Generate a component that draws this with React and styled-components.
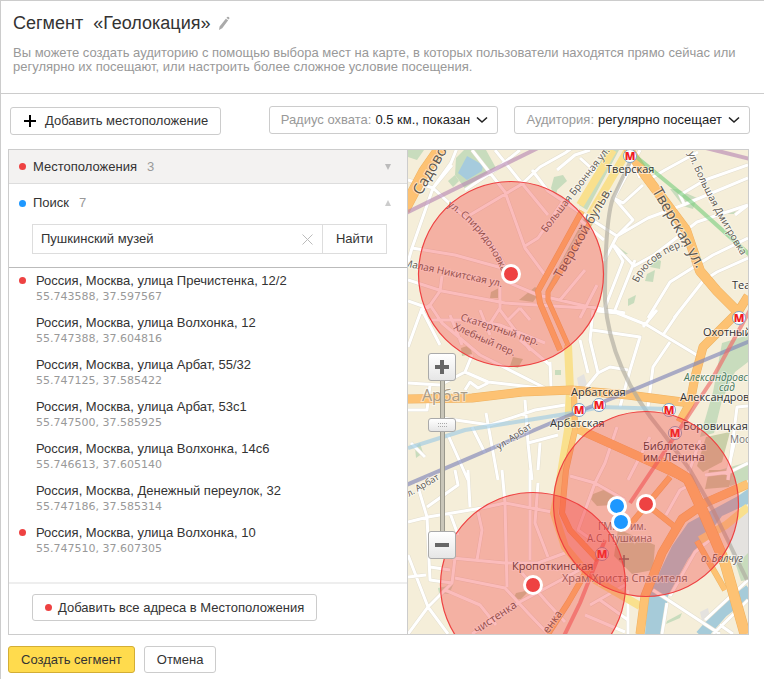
import { useState } from "react";
import styled, { createGlobalStyle } from "styled-components";

const GlobalStyle = createGlobalStyle`
  * {
    box-sizing: border-box;
  }
  body {
    margin: 0;
    background: #fff;
    color: #333;
    font-family: "Liberation Sans", Arial, sans-serif;
    font-size: 13px;
    line-height: 16px;
  }
  button, input, select {
    font: inherit;
    color: inherit;
  }
`;

const Page = styled.main`
  min-height: 100vh;
  border-top: 1px solid #ccc;
  border-left: 1px solid #ccc;
`;

const Header = styled.header`
  padding: 12px 24px 19px 12px;
  border-bottom: 1px solid #ccc;
`;

const TitleRow = styled.div`
  display: flex;
  align-items: center;
  gap: 8px;
`;

const Title = styled.h1`
  margin: 0;
  font-size: 18px;
  font-weight: 400;
  line-height: 20px;
  white-space: pre;
`;

const EditButton = styled.button`
  display: flex;
  padding: 0;
  border: 0;
  background: none;
  color: #aaa;
`;

const Lead = styled.p`
  margin: 13px 0 0;
  color: #999;
  line-height: 14px;
`;

const Toolbar = styled.div`
  display: flex;
  align-items: flex-start;
  padding: 12px 14px 14px 9px;
  gap: 16px;
`;

const Button = styled.button`
  display: inline-flex;
  align-items: center;
  justify-content: center;
  gap: 6px;
  height: ${(p) => (p.$tall ? 28 : 27)}px;
  padding: 0 12px;
  border: 1px solid ${(p) => (p.$primary ? "#d3ae35" : "#ccc")};
  border-radius: 3px;
  background: ${(p) => (p.$primary ? "#ffdb4d" : "#fff")};
  white-space: nowrap;
`;

const AddButton = styled(Button)`
  gap: 8px;
  margin-top: 1px;
  margin-right: auto;
`;

const Picker = styled.label`
  display: flex;
  align-items: center;
  gap: 4px;
  height: 28px;
  padding: 0 9px 0 11px;
  border: 1px solid #ccc;
  border-radius: 3px;
  color: #999;
  white-space: nowrap;
`;

const Select = styled.select`
  appearance: none;
  margin-right: 2px;
  padding: 0;
  border: 0;
  background: none;
  color: #222;
`;

const Card = styled.section`
  display: flex;
  margin: 0 15px 0 7px;
  border: 1px solid #ccc;
`;

const Panel = styled.div`
  flex: 0 0 399px;
  display: flex;
  flex-direction: column;
  border-right: 1px solid #ccc;
`;

const GroupButton = styled.button`
  display: flex;
  align-items: center;
  width: 100%;
  height: ${(p) => (p.$shaded ? 34 : 38)}px;
  padding: 0 16px 0 10px;
  border: 0;
  border-bottom: ${(p) => (p.$shaded ? "1px solid #ddd" : "0")};
  background: ${(p) => (p.$shaded ? "#f3f2f1" : "#fff")};
  text-align: left;
`;

const Dot = styled.span`
  flex: none;
  width: 7px;
  height: 7px;
  border-radius: 50%;
  background: ${(p) => p.$color};
`;

const GroupName = styled.span`
  margin-left: 7px;
`;

const Count = styled.span`
  margin-left: 10px;
  color: #999;
`;

const Arrow = styled.span`
  margin-left: auto;
  border: 3px solid transparent;
  border-top: ${(p) => (p.$up ? "0" : "6px solid #bbb")};
  border-bottom: ${(p) => (p.$up ? "6px solid #ccc" : "0")};
`;

const SearchForm = styled.form`
  display: flex;
  height: 30px;
  margin: 2px 20px 13px 23px;
  border: 1px solid #ddd;
`;

const SearchInput = styled.input`
  flex: 1;
  min-width: 0;
  padding: 0 8px;
  border: 0;
  outline: 0;
`;

const ClearButton = styled.button`
  display: flex;
  align-items: center;
  padding: 0 9px;
  border: 0;
  background: none;
  color: #bbb;
`;

const FindButton = styled.button`
  width: 64px;
  padding: 0;
  border: 0;
  border-left: 1px solid #ddd;
  background: none;
`;

const Results = styled.ul`
  flex: 1;
  margin: 0;
  padding: 4px 10px 16px;
  border-top: 1px solid #bbb;
  list-style: none;
`;

const Result = styled.li`
  display: grid;
  grid-template-columns: 7px 1fr;
  grid-template-rows: 17px 16px;
  column-gap: 10px;
  align-items: center;
  height: 42px;
`;

const Coords = styled.span`
  grid-column: 2;
  color: #999;
  font-family: "DejaVu Sans", Verdana, sans-serif;
  font-size: 11px;
`;

const Address = styled.span`
  grid-column: 2;
`;

const PanelFooter = styled.div`
  padding: 10px 23px 13px;
  border-top: 2px solid #eee;
`;

const MapArea = styled.div`
  position: relative;
  flex: 1;
  min-width: 0;
  overflow: hidden;
  background: #f5eed9;
`;

const MapSvg = styled.svg`
  position: absolute;
  inset: 0;
  width: 100%;
  height: 100%;
  font-family: "Open Sans", "Noto Sans", sans-serif;
`;

const ZoomControl = styled.div`
  position: absolute;
  top: 203px;
  left: 20px;
  display: flex;
  flex-direction: column;
  align-items: center;
`;

const ZoomButton = styled.button`
  display: flex;
  align-items: center;
  justify-content: center;
  width: 28px;
  height: 28px;
  padding: 0;
  border: 1px solid #aaa;
  border-radius: 3px;
  background: linear-gradient(#fff, #e6e6e6);
`;

const ZoomSlider = styled.input`
  appearance: none;
  writing-mode: vertical-lr;
  direction: rtl;
  width: 28px;
  height: 150px;
  margin: 0;
  background: linear-gradient(90deg, #9a988c 1px, #c9c6b9 1px 4px, #9a988c 4px) center / 5px 100% no-repeat;

  &::-webkit-slider-thumb {
    appearance: none;
    width: 28px;
    height: 14px;
    border: 1px solid #aaa;
    border-radius: 3px;
    background:
      repeating-linear-gradient(90deg, #aaa 0 1px, transparent 1px 2px) center 4px / 9px 1px no-repeat,
      repeating-linear-gradient(90deg, #aaa 0 1px, transparent 1px 2px) center 7px / 9px 1px no-repeat,
      linear-gradient(#fff, #e6e6e6);
  }
`;

const Actions = styled.div`
  display: flex;
  gap: 9px;
  padding: 11px 7px 4px;
`;

const results = [
  { address: "Россия, Москва, улица Пречистенка, 12/2", coords: "55.743588, 37.597567", added: true },
  { address: "Россия, Москва, улица Волхонка, 12", coords: "55.747388, 37.604816" },
  { address: "Россия, Москва, улица Арбат, 55/32", coords: "55.747125, 37.585422" },
  { address: "Россия, Москва, улица Арбат, 53с1", coords: "55.747500, 37.585925" },
  { address: "Россия, Москва, улица Волхонка, 14с6", coords: "55.746613, 37.605140" },
  { address: "Россия, Москва, Денежный переулок, 32", coords: "55.747186, 37.585314" },
  { address: "Россия, Москва, улица Волхонка, 10", coords: "55.747510, 37.607305", added: true },
];

const red = "#ee4242";
const blue = "#1e98ff";

const parks = [
  "M456 158L464 150H486L496 168L466 190L455 175Z",
  "M408 150H424L417 160L408 157Z",
  "M448 181L455 175L459 181L453 187Z",
  "M606 150H619L587 210L579 205Z",
  "M722 343L748 335V362L735 372L722 400L714 433L700 437L713 392Z",
  "M554 177L563 175L567 181L557 190L556 199L551 188Z",
  "M670 189H677L697 198L693 209L683 206Z",
  "M647 274L655 270L653 282L645 281Z",
  "M655 258L661 261L660 269L650 267Z",
  "M613 243L628 254L620 255Z",
  "M628 299L636 295L634 303L628 306Z",
  "M730 210H736L735 214H728Z",
  "M736 565L748 552V580L741 581Z",
  "M555 370H561V375H555Z",
  "M415 447L420 443L423 453L416 458Z",
  "M667 621L682 613L680 618L666 624Z",
  "M438 588L453 585L449 594L439 593Z",
  "M720 470L748 462V480L730 486Z",
];

const blocks = [
  "M586 215L594 222L556 284L546 290Z",
  "M519 300L535 287L541 291L533 302Z",
  "M491 292L499 288V298H490Z",
  "M461 348L470 345L472 354L462 356Z",
  "M513 357L523 359L518 368L510 366Z",
  "M588 496L606 489L618 494L613 505L597 506Z",
  "M618 529L655 545L653 570L632 574L614 556Z",
  "M706 437L730 432L722 462L703 472L697 466Z",
  "M516 593L530 590L521 599L513 600Z",
  "M709 470H733L729 487L705 489Z",
];

const whiteRoads = [
  "M457 148L451 163L433 188L412 248L408 262",
  "M408 180L433 188L448 202L477 228L497 252L508 272",
  "M472 150L505 192L525 248L545 275",
  "M495 150L520 181L548 215",
  "M470 215L522 184L540 167L565 153L572 148",
  "M433 188L452 165M465 190L495 170L520 150",
  "M412 248L455 255L502 268",
  "M408 280L442 291L505 303L585 308",
  "M505 281L538 295L585 306L625 313",
  "M442 276L440 291L428 308L408 301",
  "M500 286V308L486 330M520 308L508 320M520 308L530 320",
  "M532 170L548 191L578 211L617 236",
  "M557 170L575 155L590 150",
  "M525 246L538 238L565 198",
  "M580 158L600 176",
  "M585 270L560 300M597 285L580 318",
  "M643 185L623 203L614 198L640 150",
  "M614 198L633 220L617 236L604 261",
  "M645 182L665 170L698 152M640 178L628 150",
  "M604 310L623 261L613 245M617 236L648 218L683 205L748 178",
  "M614 245L634 266L654 255L697 222L748 205",
  "M580 220L604 240",
  "M648 318L670 282L713 255L748 238",
  "M674 318L703 281L717 272L748 258",
  "M735 215L748 205",
  "M685 206L680 195L705 180L748 165",
  "M597 311L617 313L647 325L700 357",
  "M615 310L635 260",
  "M592 330L640 337L630 370L620 407",
  "M580 340L588 373M593 310L590 340L598 373L585 389",
  "M598 373L610 367L628 370",
  "M643 327L657 310M680 310L663 335M670 342L653 367L648 407",
  "M408 347L421 311L430 305L442 323L480 355L545 388",
  "M421 308L440 345",
  "M408 383L440 385L465 372L488 382L540 388M465 372L472 355",
  "M465 390L470 382L478 388L488 383",
  "M408 410H427L430 385M442 418L490 425L535 410L565 405",
  "M448 435L468 480M472 427L485 453M486 413L498 480",
  "M525 400L528 443L532 480M528 443L558 435",
  "M411 443L425 457M540 443L538 470",
  "M430 320H470L500 325L545 343M450 315L462 345M500 310L530 350M480 310L490 335",
  "M550 362L551 387M520 340L550 365",
  "M408 522L428 517L482 508L505 503L552 512",
  "M418 487L427 517L430 580L452 583",
  "M468 470L470 507M427 507L458 485L455 470",
  "M450 513L458 535M478 512L482 530L477 560",
  "M502 470L505 503L507 587",
  "M530 470V560M538 483L535 523L548 557",
  "M452 558L505 563L538 563L565 553",
  "M408 555L428 607L448 634M408 634L428 607L452 583L455 558",
  "M408 577L426 575M430 567L450 570",
  "M445 590L480 605L496 625M455 578L505 588L528 613L548 634",
  "M472 634L518 603L585 567",
  "M522 573L545 600L565 622",
  "M570 476L595 483L625 500M595 483L578 530L592 540",
  "M617 427L605 463L595 483M650 437L628 480",
  "M700 440L688 475M705 475L730 472L748 463",
  "M728 480L737 407L748 406M727 475L735 440",
  "M690 485L680 490L666 515",
  "M653 590L720 634M667 603L662 634",
  "M590 605L625 585M585 615L625 632M600 600L628 620M628 590V634",
  "M713 634L748 600M705 620L748 580",
  "M720 625L733 634",
  "M670 596L695 552L722 530",
];

const yellowRoads = [
  "M568 345L570 390L568 430L560 480L554 513L565 547L590 577L640 606",
  "M613 150L580 205M628 150L590 215",
  "M700 540L726 525L748 507",
];

const orangeRoads = [
  { d: "M442 146L424 172L404 210", w: 11 },
  { d: "M628 148L645 175L686 230L700 271L717 291L738 312", w: 9 },
  { d: "M748 296L738 312L703 347L695 377L690 403L680 422", w: 8 },
  { d: "M404 399L472 398L522 392L572 390L628 395L690 403", w: 8 },
  { d: "M582 211L538 291L540 303L560 350", w: 5 },
  { d: "M592 219L548 292V300L568 345", w: 4 },
  { d: "M574 390L575 430L566 470L562 513L570 530L598 560", w: 5 },
  { d: "M578 429L638 456L688 479", w: 8 },
  { d: "M660 462L688 479L705 516L725 563L745 634", w: 10 },
  { d: "M640 634L645 596L662 553L682 519L705 503L748 484", w: 8 },
  { d: "M670 477L630 525M645 503L675 527", w: 5 },
  { d: "M590 565L568 603L548 634", w: 5 },
  { d: "M697 541L725 590", w: 5 },
];

const metroLines = [
  { d: "M404 214L540 147", color: "#b98bb4" },
  { d: "M706 148L750 159", color: "#b98bb4" },
  { d: "M634 155L690 201L750 255", color: "#7fcf83" },
  { d: "M632 158L613 198Q605 220 605 300Q610 370 663 433L690 470L713 510L747 580", color: "#aeaba0" },
  { d: "M408 448L465 430L572 413L600 407L668 409", color: "#9ecbe4" },
  { d: "M404 486L558 420L580 411L628 392L750 341", color: "#8086b8" },
  { d: "M750 310L710 383L677 433L630 503M605 540L580 603L563 638", color: "#ee6a68" },
];

const curves = [
  { id: "spiridonovka", d: "M447 206Q486 230 507 284" },
  { id: "bryusov", d: "M638 283Q648 259 686 245" },
  { id: "dmitrovka", d: "M688 153Q706 200 746 263" },
  { id: "bronnaya", d: "M546 233Q574 196 613 147" },
];

const labels = [
  { x: 421, y: 196, r: -60, size: 15, text: "Садово" },
  { x: 403, y: 266, r: 12, size: 10, text: "Малая Никитская ул." },
  { x: 561, y: 279, r: -60, size: 13, text: "Тверской бульв." },
  { x: 606, y: 173, size: 11, text: "Тверская", dark: true },
  { x: 652, y: 191, r: 60, size: 15, text: "Тверская ул." },
  { x: 460, y: 320, r: 18, size: 10, text: "Скатертный пер." },
  { x: 453, y: 329, r: 24, size: 10, text: "Хлебный пер." },
  { x: 422, y: 401, size: 16, text: "Арбат", color: "#a89c88" },
  { x: 571, y: 396, size: 11, text: "Арбатская", dark: true },
  { x: 550, y: 427, size: 11, text: "Арбатская", dark: true },
  { x: 499, y: 450, r: -34, size: 9, text: "ул. Арбат" },
  { x: 405, y: 499, r: -30, size: 9, text: "ул. Арбат" },
  { x: 732, y: 289, size: 11, text: "Теа", dark: true },
  { x: 703, y: 336, size: 11, text: "Охотный", dark: true },
  { x: 684, y: 381, size: 10, text: "Александровс", color: "#47785a", italic: true },
  { x: 719, y: 391, size: 10, text: "сад", color: "#47785a", italic: true },
  { x: 680, y: 401, size: 11, text: "Александров", dark: true },
  { x: 683, y: 430, size: 11, text: "Боровицкая", dark: true },
  { x: 730, y: 443, size: 10, text: "Мос", color: "#777" },
  { x: 643, y: 450, size: 11, text: "Библиотека", dark: true },
  { x: 643, y: 461, size: 11, text: "им. Ленина", dark: true },
  { x: 598, y: 530, size: 10, text: "ГМИИ им.", color: "#776a62" },
  { x: 587, y: 542, size: 10, text: "А.С. Пушкина", color: "#776a62" },
  { x: 701, y: 562, size: 10, text: "о. Балчуг", italic: true },
  { x: 512, y: 570, size: 11, text: "Кропоткинская", dark: true },
  { x: 562, y: 582, size: 11, text: "Храм Христа Спасителя", color: "#776a62" },
  { x: 477, y: 634, r: -34, size: 11, text: "чистенка" },
  { x: 548, y: 634, r: -54, size: 11, text: "енка" },
];

const stations = [
  [630, 156],
  [739, 318],
  [599, 405],
  [579, 410],
  [669, 410],
  [675, 433],
  [602, 554],
];

const zones = [
  [511, 274],
  [646, 504],
  [533, 585],
];

const pins = [
  { x: 511, y: 274, color: red },
  { x: 646, y: 504, color: red },
  { x: 533, y: 585, color: red },
  { x: 617, y: 506, color: blue },
  { x: 621, y: 522, color: blue },
];

const Chevron = () => (
  <svg width="12" height="8" viewBox="0 0 12 8" fill="none" stroke="#222" strokeWidth="1.6">
    <path d="M1 1.5l5 4.5 5-4.5" />
  </svg>
);

const CityMap = () => (
  <MapSvg viewBox="408 150 340 484" preserveAspectRatio="xMinYMin slice" role="img" aria-label="Карта">
    <defs>
      {curves.map((c) => (
        <path key={c.id} id={c.id} d={c.d} />
      ))}
    </defs>
    <g fill="#c8dcbd">
      {parks.map((d) => (
        <path key={d} d={d} />
      ))}
    </g>
    <g fill="#c9cfa8">
      {blocks.map((d) => (
        <path key={d} d={d} />
      ))}
    </g>
    <path d="M723 527L748 512V553L735 566Z M577 378L584 374L588 388L580 394Z M700 612L708 608L710 618L702 621Z" fill="#e4e2df" />
    <path d="M467 156L483 165L482 171L467 180L458 173Z" fill="#a6cbdd" />
    <path d="M645 634H663L668 596L688 559L705 539L722 516L748 504V489L738 496L688 523L672 546L648 596Z" fill="#a6cbd9" />
    <path d="M701 636L722 612L750 590" fill="none" stroke="#a6cbd9" strokeWidth="12" />
    <g fill="none" strokeLinejoin="round">
      <path d={whiteRoads.join("")} stroke="#e3decf" strokeWidth="4" />
      <path d={whiteRoads.join("")} stroke="#fff" strokeWidth="3" />
      <path d={yellowRoads.join("")} stroke="#f9e08d" strokeWidth="8" />
      {orangeRoads.map((road) => (
        <path key={road.d} d={road.d} stroke="#eeb262" strokeWidth={road.w + 1} />
      ))}
      {orangeRoads.map((road) => (
        <path key={road.d} d={road.d} stroke="#fdc273" strokeWidth={road.w} />
      ))}
      {metroLines.map((line) => (
        <path key={line.d} d={line.d} stroke={line.color} strokeWidth="4" opacity="0.65" />
      ))}
    </g>
    <g stroke="#fff" strokeOpacity="0.5" strokeWidth="2" paintOrder="stroke">
      {labels.map((l) => (
        <text
          key={l.text + l.x}
          transform={`translate(${l.x} ${l.y}) rotate(${l.r || 0})`}
          fontSize={l.size}
          fontWeight={l.dark ? 500 : 400}
          fontStyle={l.italic ? "italic" : "normal"}
          fill={l.color || (l.dark ? "#333" : "#5b5750")}
        >
          {l.text}
        </text>
      ))}
      <g fill="#5b5750" fontSize="10">
        <text><textPath href="#spiridonovka">ул. Спиридоновка</textPath></text>
        <text><textPath href="#bryusov">Брюсов пер.</textPath></text>
        <text><textPath href="#dmitrovka">ул. Большая Дмитровка</textPath></text>
        <text><textPath href="#bronnaya">Большая Бронная ул.</textPath></text>
      </g>
    </g>
    <path d="M624 555V567M619 559H629" stroke="#776a62" strokeWidth="1.5" />
    {stations.map(([x, y]) => (
      <g key={`${x}-${y}`}>
        <circle cx={x} cy={y} r="6.5" fill="#fff" stroke="#7fa3c4" />
        <text x={x} y={y + 4} fontSize="11" fontWeight="800" fill="#ee1c24" textAnchor="middle">М</text>
      </g>
    ))}
    {zones.map(([x, y]) => (
      <circle key={x} cx={x} cy={y} r="92.5" fill="#f23c3c" fillOpacity="0.34" stroke={red} strokeWidth="1.2" />
    ))}
    {pins.map((pin) => (
      <circle key={pin.y} cx={pin.x} cy={pin.y} r="8.5" fill={pin.color} stroke="#fff" strokeWidth="3" />
    ))}
  </MapSvg>
);

const App = () => {
  const [query, setQuery] = useState("Пушкинский музей");
  const [zoom, setZoom] = useState(73);

  return (
    <Page>
      <GlobalStyle />
      <Header>
        <TitleRow>
          <Title>{"Сегмент  «Геолокация»"}</Title>
          <EditButton aria-label="Переименовать">
            <svg width="12" height="15" viewBox="0 0 12 15" fill="currentColor">
              <path d="M7.8 2.7l2.4 1.5L4.2 12.2 1 14l.6-3.6zM8.4 1.9L9.2 1q.7-.6 1.6 0t.6 1.5l-.6.9z" />
            </svg>
          </EditButton>
        </TitleRow>
        <Lead>
          Вы можете создать аудиторию с помощью выбора мест на карте, в которых пользователи находятся
          прямо сейчас или регулярно их посещают, или настроить более сложное условие посещения.
        </Lead>
      </Header>

      <Toolbar>
        <AddButton $tall>
          <svg width="14" height="14" viewBox="0 0 14 14" stroke="#000" strokeWidth="2">
            <path d="M7 1v12M1 7h12" />
          </svg>
          Добавить местоположение
        </AddButton>
        <Picker>
          Радиус охвата:
          <Select>
            <option>0.5 км., показан</option>
          </Select>
          <Chevron />
        </Picker>
        <Picker>
          Аудитория:
          <Select>
            <option>регулярно посещает</option>
          </Select>
          <Chevron />
        </Picker>
      </Toolbar>

      <Card>
        <Panel>
          <GroupButton $shaded aria-expanded="false">
            <Dot $color={red} />
            <GroupName>Местоположения</GroupName>
            <Count>3</Count>
            <Arrow />
          </GroupButton>
          <GroupButton aria-expanded="true">
            <Dot $color={blue} />
            <GroupName>Поиск</GroupName>
            <Count>7</Count>
            <Arrow $up />
          </GroupButton>
          <SearchForm onSubmit={(e) => e.preventDefault()}>
            <SearchInput aria-label="Поиск" value={query} onChange={(e) => setQuery(e.target.value)} />
            <ClearButton type="button" aria-label="Очистить" onClick={() => setQuery("")}>
              <svg width="11" height="11" viewBox="0 0 11 11" stroke="currentColor">
                <path d="M.5.5l10 10M10.5.5l-10 10" />
              </svg>
            </ClearButton>
            <FindButton>Найти</FindButton>
          </SearchForm>
          <Results>
            {results.map((item) => (
              <Result key={item.coords}>
                {item.added && <Dot $color={red} />}
                <Address>{item.address}</Address>
                <Coords>{item.coords}</Coords>
              </Result>
            ))}
          </Results>
          <PanelFooter>
            <Button>
              <Dot $color={red} />
              Добавить все адреса в Местоположения
            </Button>
          </PanelFooter>
        </Panel>

        <MapArea>
          <CityMap />
          <ZoomControl>
            <ZoomButton aria-label="Приблизить">
              <svg width="14" height="14" viewBox="0 0 14 14" stroke="#666" strokeWidth="4">
                <path d="M7 0v14M0 7h14" />
              </svg>
            </ZoomButton>
            <ZoomSlider
              type="range"
              aria-label="Масштаб"
              value={zoom}
              onChange={(e) => setZoom(Number(e.target.value))}
            />
            <ZoomButton aria-label="Отдалить">
              <svg width="14" height="14" viewBox="0 0 14 14" stroke="#666" strokeWidth="4">
                <path d="M0 7h14" />
              </svg>
            </ZoomButton>
          </ZoomControl>
        </MapArea>
      </Card>

      <Actions>
        <Button $primary>Создать сегмент</Button>
        <Button>Отмена</Button>
      </Actions>
    </Page>
  );
};

export default App;
